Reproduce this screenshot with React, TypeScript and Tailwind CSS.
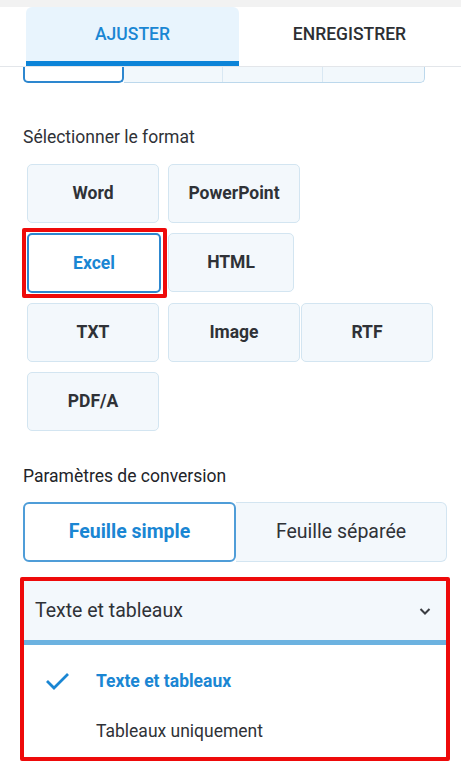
import React from "react";

const font = { fontFamily: "Roboto, 'Noto Sans', sans-serif" };

function FormatBtn({ label, w, className = "" }: { label: string; w: string; className?: string }) {
  return (
    <div
      className={`${w} h-[59px] flex items-center justify-center rounded-[5px] border border-[#d3e5f1] bg-[#f3f8fc] text-[17.5px] font-bold text-[#2f3237] ${className}`}
    >
      {label}
    </div>
  );
}

export default function App() {
  return (
    <div className="w-[461px] h-[779px] bg-white overflow-hidden text-[#2f3237]" style={font}>
      <div className="h-[7px] bg-[#f2f2f2]" />
      {/* Tabs */}
      <div className="flex h-[60px] pl-[26px] border-b border-[#e3e6ea]">
        <div className="w-[213px] h-full bg-[#e8f4fd] rounded-t-[6px] border-b-[5px] border-[#0c84d8] flex items-center justify-center text-[17.5px] font-medium text-[#1a86d3]">
          AJUSTER
        </div>
        <div className="w-[221px] h-full flex items-center justify-center text-[17.5px] font-medium text-[#2d2f33] pb-[5px]">
          ENREGISTRER
        </div>
      </div>
      {/* partial segmented */}
      <div className="ml-[23px] w-[402px] h-[16px] flex">
        <div className="w-[101px] h-full border-x-2 border-b-2 border-[#2d87cf] rounded-bl-[5px] rounded-br-[5px] bg-white" />
        <div className="flex-1 h-full bg-[#f2f8fc] border-b border-r border-[#bcd8ec] rounded-br-[5px] flex">
          <div className="w-[99px] border-r border-[#d9e8f3]" />
          <div className="w-[100px] border-r border-[#d9e8f3]" />
          <div className="flex-1" />
        </div>
      </div>
      {/* Format */}
      <div className="mt-[44px] ml-[23px] text-[17.5px] leading-[20px] text-[#2f3237]">Sélectionner le format</div>
      <div className="mt-[17px] flex flex-col gap-[10px]">
        <div className="flex ml-[27px] gap-[9px]">
          <FormatBtn label="Word" w="w-[132px]" />
          <FormatBtn label="PowerPoint" w="w-[132px]" />
        </div>
        <div className="flex ml-[27px] gap-[7px]">
          <div className="relative w-[134px] h-[60px] flex items-center justify-center rounded-[5px] border-2 border-[#2d87cf] bg-white text-[17.5px] font-bold text-[#1a86d3]">
            Excel
            <div className="absolute -left-[7px] -top-[7px] -right-[8px] -bottom-[7px] border-[4px] border-[#ee0a0a] rounded-[2px] pointer-events-none" />
          </div>
          <FormatBtn label="HTML" w="w-[126px]" />
        </div>
        <div className="flex ml-[27px] gap-[9px]">
          <FormatBtn label="TXT" w="w-[132px]" />
          <div className="flex gap-[1px]">
            <FormatBtn label="Image" w="w-[132px]" />
            <FormatBtn label="RTF" w="w-[132px]" />
          </div>
        </div>
        <div className="flex ml-[27px]">
          <FormatBtn label="PDF/A" w="w-[132px]" />
        </div>
      </div>
      {/* Conversion params */}
      <div className="mt-[35px] ml-[23px] text-[17.5px] leading-[20px] text-[#222429]">Paramètres de conversion</div>
      <div className="mt-[16px] ml-[23px] w-[424px] h-[60px] flex">
        <div className="w-[213px] h-full rounded-[6px] border-2 border-[#4f9dd8] bg-white flex items-center justify-center text-[19.5px] font-bold text-[#1a86d3]">
          Feuille simple
        </div>
        <div className="flex-1 h-full rounded-r-[6px] border border-l-0 border-[#d3e5f1] bg-[#f3f8fc] flex items-center justify-center text-[19.5px] text-[#2f3237]">
          Feuille séparée
        </div>
      </div>
      {/* Dropdown */}
      <div className="mt-[15px] ml-[20px] w-[430px] border-[4px] border-[#ee0a0a] rounded-[2px]">
        <div className="h-[59px] bg-[#f3f8fc] flex items-center justify-between pl-[11px] pr-[14px]">
          <span className="text-[19.5px] text-[#2f3237]">Texte et tableaux</span>
          <svg width="14" height="10" viewBox="0 0 14 10" fill="none">
            <path d="M2.5 3 L7 7.5 L11.5 3" stroke="#3a3d42" strokeWidth="2" />
          </svg>
        </div>
        <div className="h-[5px] bg-[#6cb2e0]" />
        <div className="bg-white pt-[24px] pb-[13px]">
          <div className="h-[24px] flex items-center">
            <div className="w-[72px] pl-[21px] flex items-center">
              <svg width="25" height="20" viewBox="0 0 25 20" fill="none">
                <path d="M2 10 L9 17 L23 3" stroke="#1a86d3" strokeWidth="2.8" />
              </svg>
            </div>
            <span className="text-[17.5px] font-bold text-[#1a86d3]">Texte et tableaux</span>
          </div>
          <div className="h-[26px] mt-[25px] flex items-center">
            <div className="w-[72px]" />
            <span className="text-[17.5px] text-[#2f3237]">Tableaux uniquement</span>
          </div>
        </div>
      </div>
    </div>
  );
}
